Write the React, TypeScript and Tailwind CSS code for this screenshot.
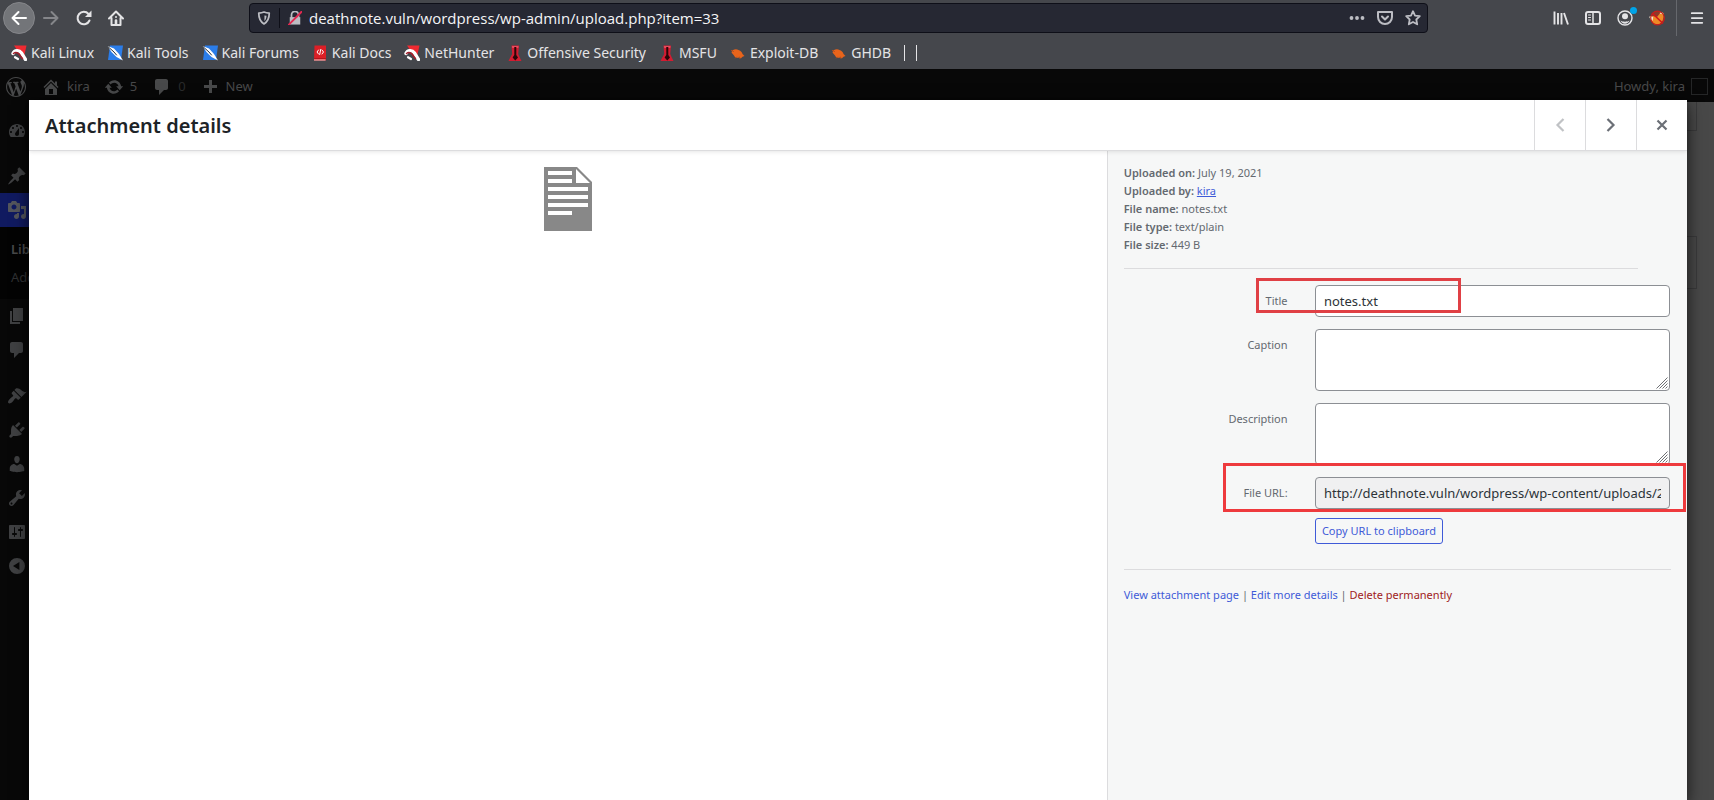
import type { ReactNode } from 'react';

const paths = {
  wordpress:
    'M20 10c0-5.51-4.49-10-10-10C4.48 0 0 4.49 0 10c0 5.52 4.48 10 10 10 5.51 0 10-4.48 10-10zM7.78 15.37L4.37 6.22c.55-.02 1.17-.08 1.17-.08.5-.06.44-1.13-.06-1.11 0 0-1.45.11-2.37.11-.18 0-.37 0-.58-.01C4.12 2.69 6.87 1.11 10 1.11c2.33 0 4.45.87 6.05 2.34-.68-.11-1.65.39-1.65 1.58 0 .74.45 1.36.9 2.1.35.61.55 1.36.55 2.46 0 1.49-1.4 5-1.4 5l-3.03-8.37c.54-.02.82-.17.82-.17.5-.05.44-1.25-.06-1.22 0 0-1.44.12-2.38.12-.87 0-2.33-.12-2.33-.12-.5-.03-.56 1.2-.06 1.22l.92.08 1.26 3.41zM17.41 10c.24-.64.74-1.87.43-4.25.7 1.29 1.05 2.71 1.05 4.25 0 3.29-1.73 6.24-4.4 7.78.97-2.59 1.94-5.2 2.92-7.78zM6.1 18.09C3.12 16.65 1.11 13.53 1.11 10c0-1.3.23-2.48.72-3.59C3.25 10.3 4.67 14.2 6.1 18.09zm4.03-6.63l2.58 6.98c-.86.29-1.76.45-2.71.45-.79 0-1.57-.11-2.29-.33.81-2.38 1.62-4.74 2.42-7.1z',
  home: 'M16 8.5l1.53 1.53-1.06 1.06L10 4.6l-6.47 6.49-1.06-1.06L10 2.5l4 4v-2h2v4zm-6-2.46l6 5.99V18H4v-5.97zM12 17v-5H8v5h4z',
  update:
    'M10.2 3.28c3.53 0 6.43 2.61 6.92 6h2.08l-3.5 4-3.5-4h2.32c-.45-1.97-2.21-3.45-4.32-3.45-1.45 0-2.73.71-3.54 1.78L4.95 5.66C6.23 4.2 8.11 3.28 10.2 3.28zm-.4 13.44c-3.52 0-6.43-2.61-6.92-6H.8l3.5-4c1.17 1.33 2.33 2.67 3.5 4H5.48c.45 1.97 2.21 3.45 4.32 3.45 1.45 0 2.73-.71 3.54-1.78l1.71 1.95c-1.28 1.46-3.15 2.38-5.25 2.38z',
  comments: 'M5 2h9c1.1 0 2 .9 2 2v7c0 1.1-.9 2-2 2h-2l-5 5v-5H5c-1.1 0-2-.9-2-2V4c0-1.1.9-2 2-2z',
  plus: 'M17 8v3h-5v5H9v-5H4V8h5V3h3v5h5z',
  dashboard:
    'M3.76 17h12.48c1.1-1.37 1.76-3.11 1.76-5 0-4.42-3.58-8-8-8s-8 3.58-8 8c0 1.89.66 3.63 1.76 5zM10 5c.55 0 1 .45 1 1s-.45 1-1 1-1-.45-1-1 .45-1 1-1zM6 7c.55 0 1 .45 1 1s-.45 1-1 1-1-.45-1-1 .45-1 1-1zm8 0c.55 0 1 .45 1 1s-.45 1-1 1-1-.45-1-1 .45-1 1-1zm-5.37 5.55L12 8v6c0 1.1-.9 2-2 2s-2-.9-2-2c0-.57.24-1.08.63-1.45zM4 11c.55 0 1 .45 1 1s-.45 1-1 1-1-.45-1-1 .45-1 1-1zm12 0c.55 0 1 .45 1 1s-.45 1-1 1-1-.45-1-1 .45-1 1-1z',
  post: 'M10.44 3.02l1.82-1.82 6.36 6.35-1.83 1.82c-1.05-.68-2.48-.57-3.41.36l-.75.75c-.92.93-1.04 2.35-.35 3.41l-1.83 1.82-2.41-2.41-2.8 2.79c-.42.42-3.38 2.71-3.8 2.29s1.86-3.39 2.28-3.81l2.79-2.79L4.1 9.36l1.83-1.82c1.05.69 2.48.57 3.4-.36l.75-.75c.93-.92 1.05-2.35.36-3.41z',
  media:
    'M13 11V4c0-.55-.45-1-1-1h-1.67L9 1H5L3.67 3H2c-.55 0-1 .45-1 1v7c0 .55.45 1 1 1h10c.55 0 1-.45 1-1zM7 4.5c1.38 0 2.5 1.12 2.5 2.5S8.38 9.5 7 9.5 4.5 8.38 4.5 7 5.62 4.5 7 4.5zM14 6h5v10.5c0 1.38-1.12 2.5-2.5 2.5S14 17.88 14 16.5s1.12-2.5 2.5-2.5c.17 0 .34.02.5.05V9h-3V6zm-4 8.05V13h2v3.5c0 1.38-1.12 2.5-2.5 2.5S7 17.88 7 16.5 8.12 14 9.5 14c.17 0 .34.02.5.05z',
  page: 'M6 15V2h10v13H6zm-1 1h8v2H3V5h2v11z',
  appearance:
    'M14.48 11.06L7.41 3.99l1.5-1.5c.5-.56 2.3-.47 3.51.32 1.21.8 1.43 1.28 2.91 2.1 1.18.64 2.45 1.26 4.45.85zm-.71.71L6.7 4.7 4.93 6.47c-.39.39-.39 1.02 0 1.41l1.06 1.06c.39.39.39 1.03 0 1.42-.6.6-1.43 1.11-2.21 1.69-.35.26-.7.53-1.01.84C1.43 14.23.4 16.08 1.4 17.07c.99 1 2.84-.03 4.18-1.36.31-.31.58-.66.85-1.02.57-.78 1.08-1.61 1.69-2.21.39-.39 1.02-.39 1.41 0l1.06 1.06c.39.39 1.02.39 1.41 0z',
  plugins:
    'M13.11 4.36L9.87 7.6 8 5.73l3.24-3.24c.35-.34 1.05-.2 1.56.32.52.51.66 1.21.31 1.55zm-8 1.77l.91-1.12 9.01 9.01-1.19.84c-.71.71-2.63 1.16-3.82 1.16H6.14L4.9 17.26c-.59.59-1.54.59-2.12 0-.59-.58-.59-1.53 0-2.12l1.24-1.24v-3.88c0-1.13.4-3.19 1.09-3.89zm7.26 3.97l3.24-3.24c.34-.35 1.04-.21 1.55.31.52.51.66 1.21.31 1.55l-3.24 3.25z',
  users:
    'M10 9.25c-2.27 0-2.73-3.44-2.73-3.44C7 4.02 7.82 2 9.97 2c2.16 0 2.98 2.02 2.71 3.81 0 0-.41 3.44-2.68 3.44zm0 2.57L12.72 10c2.39 0 4.52 2.33 4.52 4.53v2.49s-3.65 1.13-7.24 1.13c-3.65 0-7.24-1.13-7.24-1.13v-2.49c0-2.25 1.94-4.48 4.47-4.48z',
  tools:
    'M16.68 9.77c-1.34 1.34-3.3 1.67-4.95.99l-5.41 6.52c-.99.99-2.59.99-3.58 0s-.99-2.59 0-3.57l6.52-5.42c-.68-1.65-.35-3.61.99-4.95 1.28-1.28 3.12-1.62 4.72-1.06l-2.89 2.89 2.82 2.82 2.86-2.87c.53 1.58.18 3.39-1.08 4.65zM3.81 16.21c.4.39 1.04.39 1.43 0 .4-.4.4-1.04 0-1.43-.39-.4-1.03-.4-1.43 0-.39.39-.39 1.03 0 1.43z',
  settings:
    'M18 16V4c0-.55-.45-1-1-1H3c-.55 0-1 .45-1 1v12c0 .55.45 1 1 1h14c.55 0 1-.45 1-1zM8 11h1c.55 0 1 .45 1 1s-.45 1-1 1H8v1.5c0 .28-.22.5-.5.5s-.5-.22-.5-.5V13H6c-.55 0-1-.45-1-1s.45-1 1-1h1V5.5c0-.28.22-.5.5-.5s.5.22.5.5V11zm5-2h-1c-.55 0-1-.45-1-1s.45-1 1-1h1V5.5c0-.28.22-.5.5-.5s.5.22.5.5V7h1c.55 0 1 .45 1 1s-.45 1-1 1h-1v5.5c0 .28-.22.5-.5.5s-.5-.22-.5-.5V9z',
  collapse: 'M10 2a8 8 0 1 0 0 16 8 8 0 0 0 0-16zm2.4 4v8L6 10z',
};

function Dash({ name }: { name: keyof typeof paths }) {
  return (
    <svg viewBox="0 0 20 20" className="size-5 shrink-0" fill="currentColor" fillRule="evenodd" aria-hidden="true">
      <path d={paths[name]} />
    </svg>
  );
}

function Glyph({ children, className = 'size-4' }: { children: ReactNode; className?: string }) {
  return (
    <svg
      viewBox="0 0 16 16"
      className={`shrink-0 ${className}`}
      fill="none"
      stroke="currentColor"
      strokeWidth="2"
      strokeLinecap="round"
      strokeLinejoin="round"
      aria-hidden="true"
    >
      {children}
    </svg>
  );
}

const dragonIcon = (
  <Glyph>
    <path d="M3 .5h12.500L12.500 14z" fill="#ee2a31" stroke="none" />
    <path d="M2 8.500C3.500 5 8 4.500 10.500 8c1 1.500 2 3.500 4 6.500" stroke="#fff" strokeWidth="3.400" />
    <path d="M2.500 8.500c2.500-2 5-.5 6.500 2 .8 1.200 1.500 2 2.500 3" stroke="#a3202c" strokeWidth="1.500" />
    <path d="M4 12.200l3 1.800" stroke="#fff" strokeWidth="2.200" />
  </Glyph>
);
const knifeIcon = (
  <Glyph>
    <path d="M3 .5h13L14 15H1z" fill="#2b7de9" stroke="none" />
    <path d="M.5 1l6.500 2.500 5 5.500 4 6.500-6.500-3.500-5-5z" fill="#fff" stroke="none" />
    <path d="M.8 1.500l6.200 5.500 2.500 3" stroke="#26303c" strokeWidth="1" />
  </Glyph>
);
const docsIcon = (
  <Glyph>
    <path d="M2.500.5H14v15H2z" fill="#dc1f26" stroke="none" />
    <path d="M2 14.500h11.500v1H2z" fill="#f3c9c9" stroke="none" />
    <path d="M2.500 13.500h11" stroke="#b3151b" strokeWidth="1" />
    <path d="M6.500 5L5 7l1.500 2M10 5l1.500 2L10 9M8.700 4.500l-1 5" stroke="#fff" strokeWidth="1" />
  </Glyph>
);
const towerIcon = (
  <Glyph>
    <path d="M4.500.5h7.500l-.8 8.500 1.800 4 1.500 3H1.500L3 13l2.200-4z" fill="#d31c31" stroke="none" />
    <path d="M5 1h6.500l-.2 2H5.200z" fill="#ea4a5c" stroke="none" />
    <path d="M7.300 2h2v8l1.700 2.500L8.300 15.500l-2.700-3L7.300 10z" fill="#2a0608" stroke="none" />
  </Glyph>
);
const bugIcon = (
  <Glyph>
    <path d="M1.500 7.500C2 4.500 6 3.500 8.500 5c2.500.5 3.500 2.500 4 4l2 2-2 .8-1.500 1.500-2-.8C6 13.500 4.500 12 4 10.500z" fill="#e8641b" stroke="none" />
    <path d="M1.500 5.500l2 1M5.500 13l1-1M10 13.500l-.5-1.500" stroke="#b8501c" strokeWidth="1" />
  </Glyph>
);

const bookmarks = [
  { label: 'Kali Linux', icon: dragonIcon },
  { label: 'Kali Tools', icon: knifeIcon },
  { label: 'Kali Forums', icon: knifeIcon },
  { label: 'Kali Docs', icon: docsIcon },
  { label: 'NetHunter', icon: dragonIcon },
  { label: 'Offensive Security', icon: towerIcon },
  { label: 'MSFU', icon: towerIcon },
  { label: 'Exploit-DB', icon: bugIcon },
  { label: 'GHDB', icon: bugIcon },
];

function BrowserChrome() {
  return (
    <header className="bg-[#45474c] text-[#e4e4e6]">
      <div className="flex h-[36px] items-center">
        <div className="flex items-center pl-[3px]">
          <button aria-label="Back" className="flex size-8 items-center justify-center rounded-full border border-[#85868a] bg-[#737579] text-white">
            <Glyph><path d="M15 8H1.500M7.500 2L1.500 8l6 6" /></Glyph>
          </button>
          <button aria-label="Forward" className="flex size-8 items-center justify-center text-[#85868a]">
            <Glyph><path d="M1 8h13.500M8.500 2l6 6-6 6" /></Glyph>
          </button>
          <button aria-label="Reload" className="ml-px flex size-8 items-center justify-center">
            <Glyph>
              <path d="M13.500 10.500A6.200 6.200 0 1 1 12.500 4" />
              <path d="M15.500.5v6.500H9z" fill="currentColor" stroke="none" />
            </Glyph>
          </button>
          <button aria-label="Home" className="flex size-8 items-center justify-center">
            <Glyph>
              <path d="M1 8.500l7-7 7 7M3.500 8v7h9V8" />
              <path d="M8 15v-4.500" strokeWidth="2.600" />
              <path d="M8 7h.01" />
            </Glyph>
          </button>
        </div>
        <div className="ml-[117px] mr-[117px] flex h-[30px] flex-1 items-center rounded border border-[#0e0f18] bg-[#262833] pl-[7px]">
          <Glyph className="size-[14px] text-[#bcbdc3]">
            <path d="M8 1.200c2 .8 4.200 1.100 6 1.200 0 6-1.500 10-6 12.400C3.500 12.400 2 8.400 2 2.400 4 2.300 6 2 8 1.200z" />
            <path d="M8.500 5v6.500c1.500-1.400 2.300-3.500 2.400-6z" fill="currentColor" stroke="none" />
          </Glyph>
          <span className="mx-2 h-5 w-px bg-[#0e0f18]" />
          <Glyph className="size-[14px] text-[#bcbcc2]">
            <path d="M4 7V4.500a4 4 0 0 1 8 0V7" />
            <path d="M2 7h12v8.500H2z" fill="currentColor" stroke="none" />
            <path d="M1 15.500L15.500.8" stroke="#e22850" strokeWidth="2.200" />
          </Glyph>
          <input
            aria-label="Address"
            defaultValue="deathnote.vuln/wordpress/wp-admin/upload.php?item=33"
            className="ml-[7px] min-w-0 flex-1 bg-transparent font-['Open_Sans',sans-serif] text-[15px] text-[#f4f4f6] outline-none"
          />
          <div className="flex items-center text-[#bcbdc3]">
            <button aria-label="Page actions" className="flex w-7 justify-center">
              <Glyph><path d="M2.500 8h.01M8 8h.01M13.500 8h.01" strokeWidth="3.800" /></Glyph>
            </button>
            <button aria-label="Save to Pocket" className="flex w-7 justify-center">
              <Glyph>
                <path d="M1 2h14v5a7 7 0 0 1-14 0z" />
                <path d="M5 6.500l3 3 3-3" />
              </Glyph>
            </button>
            <button aria-label="Bookmark this page" className="flex w-7 justify-center">
              <Glyph><path d="M8 1.200l2 4.400 4.800.6-3.500 3.300.9 4.800L8 12l-4.200 2.300.9-4.800L1.200 6.200 6 5.600z" strokeWidth="1.800" /></Glyph>
            </button>
          </div>
        </div>
        <div className="flex h-full items-center">
          <button aria-label="Library" className="flex w-8 justify-center">
            <Glyph><path d="M1.500 1.500v13M5 3v11.500M8.500 3v11.500M11 3l4 11.500" strokeWidth="1.900" strokeLinecap="butt" /></Glyph>
          </button>
          <button aria-label="Sidebars" className="flex w-8 justify-center">
            <Glyph>
              <rect x="1" y="2" width="14" height="12" rx="2" />
              <path d="M8 2v12" strokeWidth="1.500" />
              <path d="M3.500 5h2M3.500 7.500h2M3.500 10h2" strokeWidth="1" />
            </Glyph>
          </button>
          <button aria-label="Account" className="relative flex w-8 justify-center">
            <Glyph>
              <circle cx="8" cy="8" r="7" strokeWidth="1.400" />
              <circle cx="8" cy="6.200" r="3" fill="currentColor" stroke="none" />
              <path d="M3.500 10.500c2 1.600 7 1.600 9 0-.6 2-2.300 3.200-4.500 3.200s-3.900-1.200-4.500-3.200z" fill="currentColor" stroke="none" />
            </Glyph>
            <span className="absolute -top-[3px] right-1 size-[7px] rounded-full bg-[#00a4e8]" />
          </button>
          <button aria-label="FoxyProxy" className="flex w-8 justify-center">
            <Glyph>
              <circle cx="8.500" cy="8" r="7" fill="#8e3a2a" stroke="none" />
              <path d="M1 7.500l3-1.500L8 7l4-5 2.500 1v4l-1 4-3 3-5 .5L2.500 11z" fill="#ee8a26" stroke="none" />
              <path d="M1 7l2.500.5L3 10zM11.500 3l2 .5" stroke="#f6e4d0" strokeWidth="1.400" />
              <path d="M3.500 3.500l10 9.500" stroke="#d3161a" strokeWidth="1.600" />
              <circle cx="8.500" cy="8" r="6.800" stroke="#c4201c" strokeWidth="1.200" />
            </Glyph>
          </button>
          <span className="ml-[3px] h-full w-px bg-[#66686d]" />
          <button aria-label="Open menu" className="mr-[5px] flex w-8 items-center justify-center pl-2">
            <Glyph className="size-[14px]"><path d="M2 2.500h12M2 8h12M2 13.500h12" /></Glyph>
          </button>
        </div>
      </div>
      <nav className="flex h-[33px] items-center gap-[13px] pl-[11px] pt-px text-sm">
        {bookmarks.map((b) => (
          <a key={b.label} href="#" className="flex items-center gap-1 whitespace-nowrap">
            {b.icon}
            {b.label}
          </a>
        ))}
        <span className="flex gap-[11px]">
          <span className="h-4 w-px bg-[#e4e4e6]" />
          <span className="h-4 w-px bg-[#e4e4e6]" />
        </span>
      </nav>
    </header>
  );
}

function MenuItem({ name, label, current = false }: { name: keyof typeof paths; label: string; current?: boolean }) {
  return (
    <a
      href="#"
      aria-label={label}
      className={`flex h-[34px] items-center pl-[7px] ${current ? 'bg-[#101a60] text-[#54565c]' : 'text-[#3f4042]'}`}
    >
      <Dash name={name} />
    </a>
  );
}

function AdminPage() {
  return (
    <>
      <div className="flex h-[33px] items-center bg-[#080808] pr-[6px] pt-[2px] text-[13px] text-[#48494a]">
        <a href="#" aria-label="About WordPress" className="ml-[6px]"><Dash name="wordpress" /></a>
        <a href="#" className="ml-[15px] flex items-center gap-[6px]"><Dash name="home" />kira</a>
        <a href="#" className="ml-[14px] flex items-center gap-[6px]"><Dash name="update" />5</a>
        <a href="#" className="ml-[15px] flex items-center gap-[6px]">
          <Dash name="comments" />
          <span className="text-[#2a2b2c]">0</span>
        </a>
        <a href="#" className="ml-[14px] flex items-center gap-[6px]"><Dash name="plus" />New</a>
        <a href="#" className="ml-auto flex items-center gap-[6px]">
          Howdy, kira
          <span className="size-[17px] border border-[#252627]" />
        </a>
      </div>
      <div className="flex flex-1">
        <nav className="w-40 overflow-hidden bg-[#080808] pt-[11px]">
          <div className="pb-3"><MenuItem name="dashboard" label="Dashboard" /></div>
          <MenuItem name="post" label="Posts" />
          <MenuItem name="media" label="Media" current />
          <div className="flex h-[72px] flex-col bg-[#030303] pl-[11px] pt-2 text-[13px] leading-7 text-[#2f3032]">
            <a href="#" className="font-semibold text-[#48494a]">Library</a>
            <a href="#">Add New</a>
          </div>
          <MenuItem name="page" label="Pages" />
          <div className="pb-3"><MenuItem name="comments" label="Comments" /></div>
          <MenuItem name="appearance" label="Appearance" />
          <MenuItem name="plugins" label="Plugins" />
          <MenuItem name="users" label="Users" />
          <MenuItem name="tools" label="Tools" />
          <MenuItem name="settings" label="Settings" />
          <MenuItem name="collapse" label="Collapse menu" />
        </nav>
        <main className="flex-1 bg-[#484848] pr-[17px]">
          <div className="h-[29px] border-x border-b border-[#3a3a3b]" />
          <div className="mt-[105px] h-[53px] border border-[#3a3a3b]" />
        </main>
      </div>
    </>
  );
}

const details = [
  { label: 'Uploaded on:', value: 'July 19, 2021' },
  { label: 'Uploaded by:', value: 'kira', link: true },
  { label: 'File name:', value: 'notes.txt' },
  { label: 'File type:', value: 'text/plain' },
  { label: 'File size:', value: '449 B' },
];

const fieldBox = 'block w-[65%] rounded border border-[#8c8f94] px-2 text-[13px] text-[#2c3338]';

function Grip() {
  return (
    <svg viewBox="0 0 12 12" className="pointer-events-none absolute bottom-[2px] right-[2px] size-3" stroke="#6f7174" aria-hidden="true">
      <path d="M.5 11.500l11-11M3.500 11.500l8-8M6.500 11.500l5-5M9.500 11.500l2-2" strokeWidth="1" />
    </svg>
  );
}

function Field({ id, label, children }: { id: string; label: string; children: ReactNode }) {
  return (
    <div className="relative flex justify-between">
      <label htmlFor={id} className="w-[30%] pt-[7px] text-right leading-[18px]">{label}</label>
      {children}
    </div>
  );
}

function AttachmentModal() {
  return (
    <section
      role="dialog"
      aria-label="Attachment details"
      className="absolute bottom-0 left-[29px] right-[27px] top-[31px] flex flex-col bg-white shadow-[0_5px_15px_rgba(0,0,0,0.7)]"
    >
      <div className="z-10 flex h-[51px] border-b border-[#dcdcde] bg-white shadow-[0_1px_4px_rgba(0,0,0,0.1)]">
        <h1 className="flex-1 px-4 text-xl font-semibold leading-[52px] text-[#1d2327]">Attachment details</h1>
        <button disabled aria-label="Previous" className="flex w-[51px] items-center justify-center border-l border-[#dcdcde] text-[#c0c2c5]">
          <Glyph><path d="M11.500 2L5.500 8l6 6" strokeWidth="2.200" strokeLinecap="butt" strokeLinejoin="miter" /></Glyph>
        </button>
        <button aria-label="Next" className="flex w-[51px] items-center justify-center border-l border-[#dcdcde] text-[#6b6f76]">
          <Glyph><path d="M4.500 2l6 6-6 6" strokeWidth="2.200" strokeLinecap="butt" strokeLinejoin="miter" /></Glyph>
        </button>
        <button aria-label="Close" className="flex w-[51px] items-center justify-center border-l border-[#dcdcde] text-[#6b6f76]">
          <Glyph><path d="M3.500 3.500l9 9M12.500 3.500l-9 9" strokeWidth="2.200" strokeLinecap="butt" /></Glyph>
        </button>
      </div>
      <div className="flex flex-1">
        <div className="flex flex-1 justify-center pt-4">
          <svg viewBox="0 0 48 64" className="h-16 w-12" role="img" aria-label="Text file">
            <path d="M0 0h33l15 15v49H0z" fill="#888" />
            <path d="M4 4h24v4H4zM4 12h24v4H4zM4 20h40v4H4zM4 28h40v4H4zM4 36h40v4H4zM4 44h24v4H4zM32 2l14 14H32z" fill="#fff" />
          </svg>
        </div>
        <aside className="w-[35%] border-l border-[#dcdcde] bg-[#f6f7f7] px-4 text-[11px] text-[#646970]">
          <div className="mr-[33px] border-b border-[#dcdcde] pb-[14px] pt-[13px] leading-[18px]">
            {details.map((d) => (
              <div key={d.label}>
                <strong className="font-semibold">{d.label}</strong>{' '}
                {d.link ? <a href="#" className="text-[#3f5bd8] underline">{d.value}</a> : d.value}
              </div>
            ))}
          </div>
          <form className="flex flex-col gap-3 pr-px pt-4">
            <Field id="title" label="Title">
              <input id="title" defaultValue="notes.txt" className={`${fieldBox} h-8 bg-white`} />
              <span className="pointer-events-none absolute -top-[7px] left-[132px] h-[35px] w-[205px] border-[3px] border-[#e04045]" />
            </Field>
            <Field id="caption" label="Caption">
              <textarea id="caption" className={`${fieldBox} h-[62px] resize-none bg-white`} />
              <Grip />
            </Field>
            <Field id="description" label="Description">
              <textarea id="description" className={`${fieldBox} h-[62px] resize-none bg-white`} />
              <Grip />
            </Field>
            <Field id="url" label="File URL:">
              <input
                id="url"
                readOnly
                value="http://deathnote.vuln/wordpress/wp-content/uploads/2021/07/notes.txt"
                className={`${fieldBox} h-8 bg-[#f0f0f1]`}
              />
              <span className="pointer-events-none absolute -right-4 -top-[14px] left-[99px] h-[49px] border-[3px] border-[#ee3a3d]" />
            </Field>
            <div className="-mt-[3px] ml-[35%]">
              <button type="button" className="h-[26px] rounded-[3px] border border-[#3f5bd8] px-[6px] text-[#3f5bd8]">
                Copy URL to clipboard
              </button>
            </div>
          </form>
          <div className="mt-[25px] border-t border-[#dcdcde] pt-4 leading-[18px]">
            <a href="#" className="text-[#3f5bd8]">View attachment page</a> |{' '}
            <a href="#" className="text-[#3f5bd8]">Edit more details</a> |{' '}
            <button type="button" className="text-[#a01c1c]">Delete permanently</button>
          </div>
        </aside>
      </div>
    </section>
  );
}

export default function App() {
  return (
    <div className="flex min-h-screen flex-col font-['Noto_Sans',sans-serif]">
      <BrowserChrome />
      <div className="relative flex flex-1 flex-col overflow-hidden">
        <AdminPage />
        <AttachmentModal />
      </div>
    </div>
  );
}
